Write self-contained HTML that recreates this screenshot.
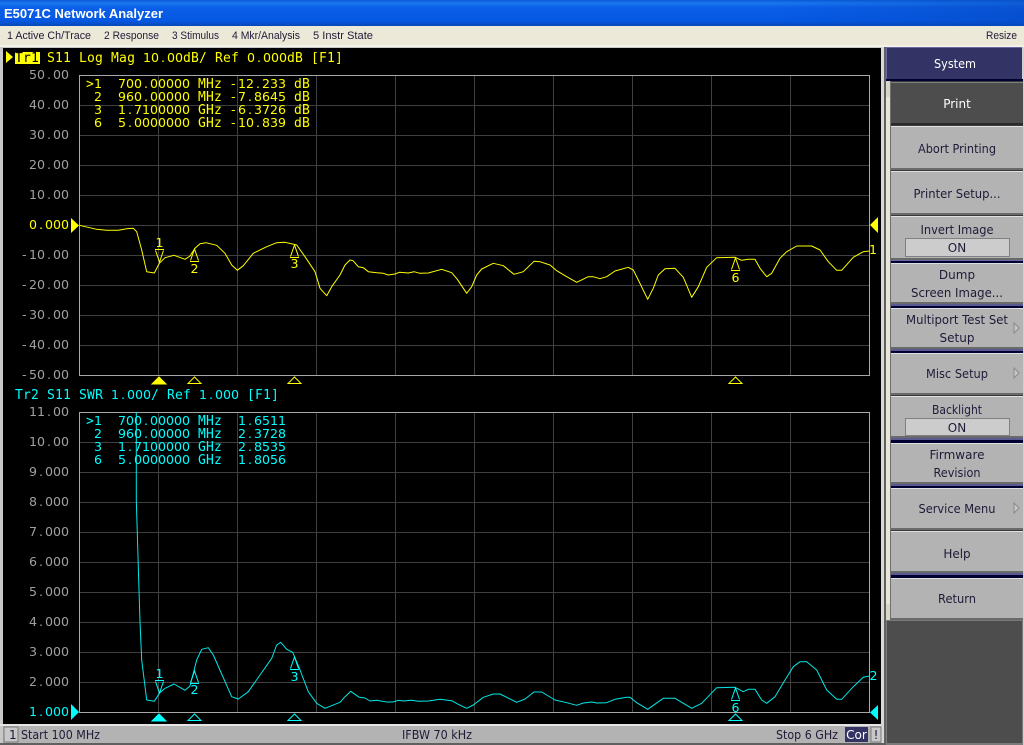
<!DOCTYPE html>
<html><head><meta charset="utf-8"><title>E5071C Network Analyzer</title>
<style>
html,body{margin:0;padding:0;width:1024px;height:745px;overflow:hidden;background:#b3b3b3}
svg{display:block}
.ui{font-family:"Liberation Sans",sans-serif;font-size:12px;fill:#201a38}
.btn{font-family:"DejaVu Sans",sans-serif;font-size:12px;fill:#201a38;text-anchor:middle}
.m{font-family:"DejaVu Sans Mono",monospace;font-size:13px;letter-spacing:.18px}
.d{font-family:"DejaVu Sans",sans-serif;font-size:12.6px;letter-spacing:0}
.ax{fill:#a0a0a0}
.y{fill:#ffff00}.c{fill:#00ffff}
.cr{shape-rendering:crispEdges}
</style></head><body>
<svg xmlns="http://www.w3.org/2000/svg" width="1024" height="745" viewBox="0 0 1024 745">
<defs>
<linearGradient id="tb" x1="0" y1="0" x2="0" y2="1"><stop offset="0" stop-color="#0a5ad8"/><stop offset=".12" stop-color="#1a78f0"/><stop offset=".3" stop-color="#0a5ee8"/><stop offset=".8" stop-color="#0558e2"/><stop offset="1" stop-color="#0648b8"/></linearGradient>
<linearGradient id="tr" x1="0" y1="0" x2="1" y2="0"><stop offset=".75" stop-color="#0648c0" stop-opacity="0"/><stop offset="1" stop-color="#0648c0" stop-opacity=".55"/></linearGradient>
</defs>
<g class="cr">
<rect width="1024" height="745" fill="#b3b3b3"/>
<rect width="1024" height="26" fill="url(#tb)"/><rect width="1024" height="26" fill="url(#tr)"/>
<rect y="26" width="1024" height="20" fill="#ece9d8"/>
<rect y="45" width="1024" height="2" fill="#f4f2e8"/>
<rect y="47" width="886" height="698" fill="#c8c8c8"/>
<rect x="3" y="48" width="878" height="676" fill="#000"/>
<rect x="881" y="47" width="3" height="698" fill="#d8d8d8"/>
<rect x="884" y="47" width="2" height="698" fill="#606060"/>
<rect x="3" y="724" width="878" height="19" fill="#b3b3b3"/>
<rect x="0" y="724" width="881" height="2" fill="#e4e4e4"/>
<rect x="0" y="743" width="886" height="2" fill="#606060"/>
<rect x="4" y="727" width="14" height="15" fill="#c8c8c8" stroke="#7a7a7a"/>
<rect x="845" y="727" width="23" height="15" fill="#333366"/>
<rect x="871" y="727" width="10" height="15" fill="#c8c8c8" stroke="#7a7a7a"/>
<rect x="886" y="47" width="138" height="698" fill="#d0d0d0"/>
<rect x="886" y="47" width="136" height="33" fill="#333366"/>
<rect x="886" y="47" width="136" height="1" fill="#6a6aa0"/>
<rect x="886" y="47" width="1" height="33" fill="#6a6aa0"/>
<rect x="886" y="79" width="137" height="2" fill="#000033"/>
<rect x="886" y="81" width="5" height="540" fill="#e8e6d8"/>
<rect x="890" y="81" width="1" height="540" fill="#707070"/>
<rect x="886" y="81" width="4" height="16" fill="#d8d6c8"/>
<rect x="886" y="604" width="4" height="16" fill="#d8d6c8"/>
<rect x="891" y="81" width="132" height="540" fill="#3a3a3a"/>
<rect x="891" y="260" width="132" height="1" fill="#6a6aa0"/><rect x="891" y="261" width="132" height="2" fill="#000033"/>
<rect x="891" y="304" width="132" height="2" fill="#5a5a90"/><rect x="891" y="306" width="132" height="2" fill="#000033"/>
<rect x="891" y="349" width="132" height="2" fill="#5a5a90"/><rect x="891" y="351" width="132" height="2" fill="#000033"/>
<rect x="891" y="438" width="132" height="2" fill="#5a5a90"/><rect x="891" y="440" width="132" height="3" fill="#000033"/>
<rect x="891" y="484" width="132" height="2" fill="#5a5a90"/><rect x="891" y="486" width="132" height="2" fill="#000033"/>
<rect x="891" y="573" width="132" height="2" fill="#5a5a90"/><rect x="891" y="575" width="132" height="3" fill="#000033"/>
<rect x="891" y="82" width="132" height="43" fill="#4d4d4d"/><rect x="891" y="123" width="132" height="2" fill="#2a2a2a"/><rect x="891" y="82" width="132" height="1" fill="#808080"/>
<rect x="891" y="126" width="132" height="44" fill="#b3b3b3"/><rect x="891" y="126" width="132" height="1" fill="#e0e0e0"/><rect x="891" y="168" width="132" height="2" fill="#6a6a6a"/>
<rect x="891" y="171" width="132" height="44" fill="#b3b3b3"/><rect x="891" y="171" width="132" height="1" fill="#e0e0e0"/><rect x="891" y="213" width="132" height="2" fill="#6a6a6a"/>
<rect x="891" y="216" width="132" height="44" fill="#b3b3b3"/><rect x="891" y="216" width="132" height="1" fill="#e0e0e0"/><rect x="891" y="258" width="132" height="2" fill="#6a6a6a"/>
<rect x="905.500" y="238.500" width="104" height="18" fill="#cccccc" stroke="#808080"/>
<rect x="891" y="263" width="132" height="41" fill="#b3b3b3"/><rect x="891" y="263" width="132" height="1" fill="#e0e0e0"/><rect x="891" y="302" width="132" height="2" fill="#6a6a6a"/>
<rect x="891" y="308" width="132" height="41" fill="#b3b3b3"/><rect x="891" y="308" width="132" height="1" fill="#e0e0e0"/><rect x="891" y="347" width="132" height="2" fill="#6a6a6a"/>
<rect x="891" y="353" width="132" height="42" fill="#b3b3b3"/><rect x="891" y="353" width="132" height="1" fill="#e0e0e0"/><rect x="891" y="393" width="132" height="2" fill="#6a6a6a"/>
<rect x="891" y="396" width="132" height="42" fill="#b3b3b3"/><rect x="891" y="396" width="132" height="1" fill="#e0e0e0"/><rect x="891" y="436" width="132" height="2" fill="#6a6a6a"/>
<rect x="905.500" y="418.500" width="104" height="17" fill="#cccccc" stroke="#808080"/>
<rect x="891" y="443" width="132" height="41" fill="#b3b3b3"/><rect x="891" y="443" width="132" height="1" fill="#e0e0e0"/><rect x="891" y="482" width="132" height="2" fill="#6a6a6a"/>
<rect x="891" y="488" width="132" height="42" fill="#b3b3b3"/><rect x="891" y="488" width="132" height="1" fill="#e0e0e0"/><rect x="891" y="528" width="132" height="2" fill="#6a6a6a"/>
<rect x="891" y="531" width="132" height="42" fill="#b3b3b3"/><rect x="891" y="531" width="132" height="1" fill="#e0e0e0"/><rect x="891" y="571" width="132" height="2" fill="#6a6a6a"/>
<rect x="891" y="578" width="132" height="42" fill="#b3b3b3"/><rect x="891" y="578" width="132" height="1" fill="#e0e0e0"/><rect x="891" y="618" width="132" height="2" fill="#6a6a6a"/>
<rect x="886" y="620" width="137" height="125" fill="#7a7a7a"/>
<rect x="887" y="621" width="135" height="122" fill="#4d4d4d"/>
<path d="M158.500 75V375M237.500 75V375M316.500 75V375M395.500 75V375M474.500 75V375M553.500 75V375M632.500 75V375M711.500 75V375M790.500 75V375M79 105.500H869M79 135.500H869M79 165.500H869M79 195.500H869M79 225.500H869M79 255.500H869M79 285.500H869M79 315.500H869M79 345.500H869" stroke="#404040" fill="none"/>
<rect x="79.500" y="75.500" width="790" height="300" fill="none" stroke="#a8a8a8"/>
<path d="M158.500 412V712M237.500 412V712M316.500 412V712M395.500 412V712M474.500 412V712M553.500 412V712M632.500 412V712M711.500 412V712M790.500 412V712M79 442.500H869M79 472.500H869M79 502.500H869M79 532.500H869M79 562.500H869M79 592.500H869M79 622.500H869M79 652.500H869M79 682.500H869" stroke="#404040" fill="none"/>
<rect x="79.500" y="412.500" width="790" height="300" fill="none" stroke="#a8a8a8"/>
<rect x="15" y="52" width="25" height="12" fill="#ffff00"/>
</g>
<polygon points="6,51 13,57 6,63" fill="#ffff00"/>

<polyline fill="none" stroke="#ffff00" stroke-width="1" stroke-linejoin="round" points="79.300,225.300 96.700,229.300 106.700,230.300 118.300,230.300 126.700,228.700 133.300,228.300 136.700,231.700 141.700,250 146.700,271.700 154.300,273 159.300,263.300 165,257.700 174,255.300 185,259.300 190,256 195,248.300 200,243.700 206,242.700 216.700,245.300 225,253.300 231.700,265 237.300,270.300 243.300,265.700 253.300,253.300 266.700,246.700 276.700,242.700 285,242.300 296.700,245 305,256.700 315,271.700 320,288.300 326.700,295.700 331.700,286.700 340,275 345,265 350,260 353,260.700 358.300,266.700 363.300,267.700 368.300,271.700 376.700,272.700 383.300,273.300 388.300,275 395,274 399.300,272.300 408.300,273 414,271.700 420,273.300 428.300,273 441.700,269.300 451.700,272.700 457.300,279.300 466.700,293.300 471.700,286.700 476.700,275 481.700,269 493.300,263.300 503.300,265.700 514,274.300 523.300,271.700 534,261.300 540,261.700 550,265 556.700,270.700 566.700,276.700 576.700,282.300 588.300,276.700 593.300,276.700 600,278.700 606.700,276.700 615,271 628.300,267.300 633.300,270 638.300,280 647.700,299.300 653.300,288.300 658.300,275 665,268.700 675,268.300 683.300,277.300 691.700,297.300 698.300,286.700 706.700,267.300 716.700,257.700 735,257.300 741.700,260.300 748.300,259.300 755,259.300 760,268.300 766.700,276.700 771.700,273.300 780,258.300 786.700,251.700 796.700,246 811.700,246 820,250 828.300,261.700 836.700,270.300 841.700,270.300 853.300,257.300 863.300,251.700 869.300,251"/>
<polyline fill="none" stroke="#00e8e8" stroke-width="1" stroke-linejoin="round" points="136.300,412 136.300,500 139,590 140,621.700 141.700,660 146.700,700 154.300,701.300 159.300,693.300 165,688.300 174,684 185,690.300 190,686 196.700,660 201.700,649.300 208.300,647.700 213.300,655 231.700,696.700 238.300,699 248.300,691.700 260,675 271.700,658.300 276.700,645 280.700,642.300 286.700,649.300 292.700,652.300 300,670 308.300,691.700 316.700,703.300 325,708.300 340,702.300 345,696.700 350.700,691.300 359.300,697.300 365,698 370,701 376.700,700.300 386.700,702 393,702 398.300,700.300 403,701 411.700,700.300 418.300,701.300 428.300,701 440,699.300 451.700,700.700 458.300,704.300 466.700,708.300 473.300,705 483.300,697.300 493.300,694 500,694 516.700,702.300 525,699 534,692 541.700,692 555,700 566.700,702.700 576.700,705.300 583.300,703 591.700,702 596.700,703 606.700,702.700 615,699.300 626.700,697.300 630,697.300 636.700,702.700 647.700,709.300 663.300,698.300 675,698.300 691.700,708.300 701.700,703.300 716.700,687.700 735,687.300 743.300,691.700 748.300,689.300 755,689.300 761.700,700 766.700,703.300 775,696.700 785,680 793.300,666.700 800,661.700 806.700,661.700 816.700,670 826.700,690 836.700,699.300 841.700,699.300 853.300,686.700 863.300,677.300 869.300,676"/>

<!-- reference triangles -->
<polygon points="71,218 79,225.500 71,233" fill="#ffff00"/>
<polygon points="878,217 870,225 878,233" fill="#ffff00"/>
<polygon points="71,704 79,712 71,720" fill="#00ffff"/>
<polygon points="878,705 870,712.500 878,720" fill="#00ffff"/>

<!-- axis stimulus markers -->
<g fill="none" stroke="#ffff00">
<polygon points="152,384 159,377 166,384" fill="#ffff00"/>
<polygon points="188,383.500 194.500,377 201,383.500"/>
<polygon points="288,383.500 294.500,377 301,383.500"/>
<polygon points="729,383.500 735.500,377 742,383.500"/>
<path d="M155 249.500H164M155.500 250.500L159.500 262L163.500 250.500"/>
<path d="M190 261.500H199M190.500 260.500L194.500 249L198.500 260.500"/>
<path d="M290 257.500H299M290.500 256.500L294.500 245L298.500 256.500"/>
<path d="M731 270.500H740M731.500 269.500L735.500 258L739.500 269.500"/>
</g>
<g fill="none" stroke="#00ffff">
<polygon points="152,721 159,714 166,721" fill="#00ffff"/>
<polygon points="188,720.500 194.500,714 201,720.500"/>
<polygon points="288,720.500 294.500,714 301,720.500"/>
<polygon points="729,720.500 735.500,714 742,720.500"/>
<path d="M155 680.500H164M155.500 681.500L159.500 693L163.500 681.500"/>
<path d="M190 683.500H199M190.500 682.500L194.500 671L198.500 682.500"/>
<path d="M290 669.500H299M290.500 668.500L294.500 657L298.500 668.500"/>
<path d="M731 700.500H740M731.500 699.500L735.500 688L739.500 699.500"/>
</g>

<!-- title and menu -->
<text x="4" y="18" font-family="'Liberation Sans',sans-serif" font-weight="bold" font-size="13" fill="#fff" textLength="159" lengthAdjust="spacingAndGlyphs">E5071C Network Analyzer</text>
<g class="ui" style="font-size:11px" fill="#201a38">
<text x="7" y="39" textLength="84" lengthAdjust="spacingAndGlyphs">1 Active Ch/Trace</text>
<text x="104" y="39" textLength="55" lengthAdjust="spacingAndGlyphs">2 Response</text>
<text x="172" y="39" textLength="47" lengthAdjust="spacingAndGlyphs">3 Stimulus</text>
<text x="232" y="39" textLength="68" lengthAdjust="spacingAndGlyphs">4 Mkr/Analysis</text>
<text x="313" y="39" textLength="60" lengthAdjust="spacingAndGlyphs">5 Instr State</text>
<text x="986" y="39" textLength="31" lengthAdjust="spacingAndGlyphs">Resize</text>
</g>

<!-- trace headers -->
<g class="m">
<text x="15" y="62" fill="#000">Tr1</text>
<text x="47" y="62" class="y">S11 Log Mag</text>
<text class="d y" x="143 151 161 167 175" y="62">10.00</text>
<text x="183" y="62" class="y">dB/ Ref</text>
<text class="d y" x="247 257 263 271 279" y="62">0.000</text>
<text x="287" y="62" class="y">dB [F1]</text>

<text x="15" y="399" class="c">Tr2 S11 SWR</text>
<text class="d c" x="111 121 127 135 143" y="399">1.000</text>
<text x="151" y="399" class="c">/ Ref</text>
<text class="d c" x="199 209 215 223 231" y="399">1.000</text>
<text x="247" y="399" class="c">[F1]</text>

<g class="y">
<text x="86" y="88">&gt;</text><text class="d" x="94" y="88">1</text>
<text class="d" x="118 126 134 144 150 158 166 174 182" y="88">700.00000</text><text x="198" y="88">MHz</text>
<text class="d" x="231 238 246 256 262 270 278" y="88">-12.233</text><text x="294" y="88">dB</text>
<text class="d" x="94" y="101">2</text>
<text class="d" x="118 126 134 144 150 158 166 174 182" y="101">960.00000</text><text x="198" y="101">MHz</text>
<text class="d" x="231 238 248 254 262 270 278" y="101">-7.8645</text><text x="294" y="101">dB</text>
<text class="d" x="94" y="114">3</text>
<text class="d" x="118 128 134 142 150 158 166 174 182" y="114">1.7100000</text><text x="198" y="114">GHz</text>
<text class="d" x="231 238 248 254 262 270 278" y="114">-6.3726</text><text x="294" y="114">dB</text>
<text class="d" x="94" y="127">6</text>
<text class="d" x="118 128 134 142 150 158 166 174 182" y="127">5.0000000</text><text x="198" y="127">GHz</text>
<text class="d" x="231 238 246 256 262 270 278" y="127">-10.839</text><text x="294" y="127">dB</text>
</g>
<g class="c">
<text x="86" y="425">&gt;</text><text class="d" x="94" y="425">1</text>
<text class="d" x="118 126 134 144 150 158 166 174 182" y="425">700.00000</text><text x="198" y="425">MHz</text>
<text class="d" x="238 248 254 262 270 278" y="425">1.6511</text>
<text class="d" x="94" y="438">2</text>
<text class="d" x="118 126 134 144 150 158 166 174 182" y="438">960.00000</text><text x="198" y="438">MHz</text>
<text class="d" x="238 248 254 262 270 278" y="438">2.3728</text>
<text class="d" x="94" y="451">3</text>
<text class="d" x="118 128 134 142 150 158 166 174 182" y="451">1.7100000</text><text x="198" y="451">GHz</text>
<text class="d" x="238 248 254 262 270 278" y="451">2.8535</text>
<text class="d" x="94" y="464">6</text>
<text class="d" x="118 128 134 142 150 158 166 174 182" y="464">5.0000000</text><text x="198" y="464">GHz</text>
<text class="d" x="238 248 254 262 270 278" y="464">1.8056</text>
</g>
<g class="d ax">
<text x="29 37 47 53 61" y="79">50.00</text>
<text x="29 37 47 53 61" y="109">40.00</text>
<text x="29 37 47 53 61" y="139">30.00</text>
<text x="29 37 47 53 61" y="169">20.00</text>
<text x="29 37 47 53 61" y="199">10.00</text>
<text x="29 39 45 53 61" y="229" style="fill:#ffff00">0.000</text>
<text x="22 29 37 47 53 61" y="259">-10.00</text>
<text x="22 29 37 47 53 61" y="289">-20.00</text>
<text x="22 29 37 47 53 61" y="319">-30.00</text>
<text x="22 29 37 47 53 61" y="349">-40.00</text>
<text x="22 29 37 47 53 61" y="379">-50.00</text>
<text x="29 37 47 53 61" y="416">11.00</text>
<text x="29 37 47 53 61" y="446">10.00</text>
<text x="29 39 45 53 61" y="476">9.000</text>
<text x="29 39 45 53 61" y="506">8.000</text>
<text x="29 39 45 53 61" y="536">7.000</text>
<text x="29 39 45 53 61" y="566">6.000</text>
<text x="29 39 45 53 61" y="596">5.000</text>
<text x="29 39 45 53 61" y="626">4.000</text>
<text x="29 39 45 53 61" y="656">3.000</text>
<text x="29 39 45 53 61" y="686">2.000</text>
<text x="29 39 45 53 61" y="716" style="fill:#00ffff">1.000</text>
</g>
<g class="d y" text-anchor="middle">
<text x="159.500" y="247">1</text><text x="194.500" y="273">2</text><text x="294.500" y="268">3</text><text x="735.500" y="282">6</text><text x="873" y="254">1</text>
</g>
<g class="d c" text-anchor="middle">
<text x="159.500" y="678">1</text><text x="194.500" y="694">2</text><text x="294.500" y="681">3</text><text x="735.500" y="712">6</text><text x="873.500" y="680">2</text>
</g>
</g>

<!-- status bar -->
<g class="btn" style="font-size:12px">
<text x="9" y="739" style="text-anchor:start">1</text>
<text x="21" y="739" style="text-anchor:start" textLength="79" lengthAdjust="spacingAndGlyphs">Start 100 MHz</text>
<text x="402" y="739" style="text-anchor:start" textLength="70" lengthAdjust="spacingAndGlyphs">IFBW 70 kHz</text>
<text x="776" y="739" style="text-anchor:start" textLength="62" lengthAdjust="spacingAndGlyphs">Stop 6 GHz</text>
<text x="856.500" y="739" style="fill:#fff">Cor</text>
<text x="876" y="739">!</text>
</g>

<!-- softkeys -->
<g class="btn">
<text x="955" y="68" style="fill:#fff" textLength="42" lengthAdjust="spacingAndGlyphs">System</text>
<text x="957" y="108" style="fill:#fff">Print</text>
<text x="957" y="153" textLength="78" lengthAdjust="spacingAndGlyphs">Abort Printing</text>
<text x="957" y="198" textLength="87" lengthAdjust="spacingAndGlyphs">Printer Setup...</text>
<text x="957" y="234" textLength="73" lengthAdjust="spacingAndGlyphs">Invert Image</text>
<text x="957" y="252">ON</text>
<text x="957" y="279">Dump</text>
<text x="957" y="297" textLength="92" lengthAdjust="spacingAndGlyphs">Screen Image...</text>
<text x="957" y="324" textLength="102" lengthAdjust="spacingAndGlyphs">Multiport Test Set</text>
<text x="957" y="342">Setup</text>
<text x="957" y="378" textLength="62" lengthAdjust="spacingAndGlyphs">Misc Setup</text>
<text x="957" y="414" textLength="50" lengthAdjust="spacingAndGlyphs">Backlight</text>
<text x="957" y="432">ON</text>
<text x="957" y="459" textLength="55" lengthAdjust="spacingAndGlyphs">Firmware</text>
<text x="957" y="477" textLength="47" lengthAdjust="spacingAndGlyphs">Revision</text>
<text x="957" y="513" textLength="77" lengthAdjust="spacingAndGlyphs">Service Menu</text>
<text x="957" y="558">Help</text>
<text x="957" y="603" textLength="38" lengthAdjust="spacingAndGlyphs">Return</text>
</g>
<g fill="#c8c8c8" stroke="#8a8a8a" stroke-width="1">
<polygon points="1014,323 1019,328 1014,333"/>
<polygon points="1014,368 1019,373 1014,378"/>
<polygon points="1014,503 1019,508 1014,513"/>
</g>
</svg>
</body></html>
